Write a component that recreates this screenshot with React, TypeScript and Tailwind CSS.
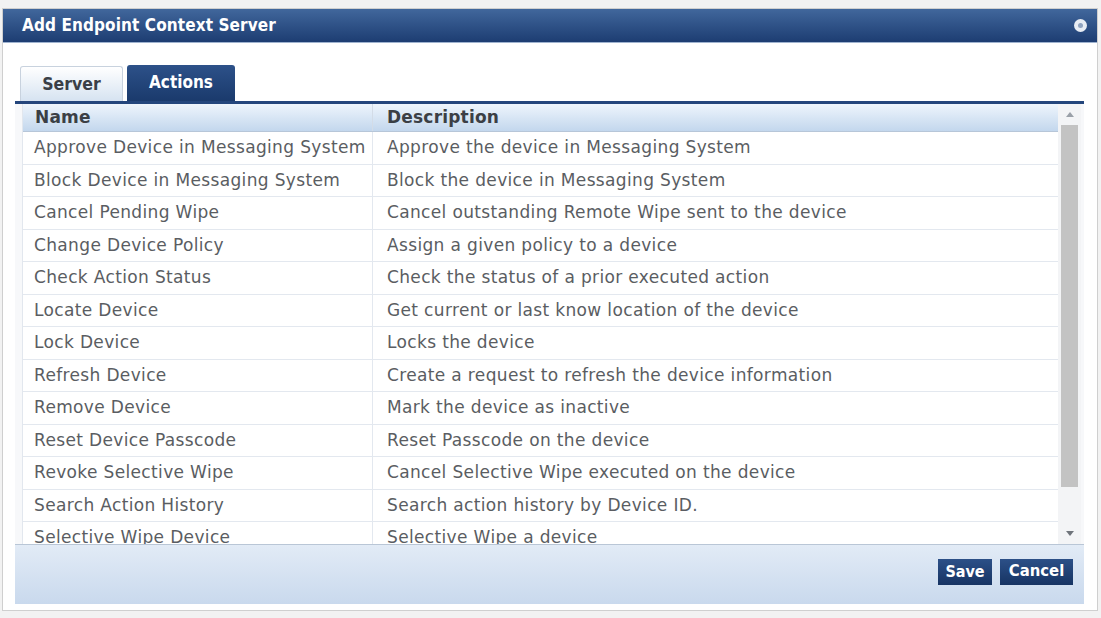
import React from "react";

const rows: [string, string][] = [
  ["Approve Device in Messaging System", "Approve the device in Messaging System"],
  ["Block Device in Messaging System", "Block the device in Messaging System"],
  ["Cancel Pending Wipe", "Cancel outstanding Remote Wipe sent to the device"],
  ["Change Device Policy", "Assign a given policy to a device"],
  ["Check Action Status", "Check the status of a prior executed action"],
  ["Locate Device", "Get current or last know location of the device"],
  ["Lock Device", "Locks the device"],
  ["Refresh Device", "Create a request to refresh the device information"],
  ["Remove Device", "Mark the device as inactive"],
  ["Reset Device Passcode", "Reset Passcode on the device"],
  ["Revoke Selective Wipe", "Cancel Selective Wipe executed on the device"],
  ["Search Action History", "Search action history by Device ID."],
  ["Selective Wipe Device", "Selective Wipe a device"],
];

const cond = { fontFamily: '"DejaVu Sans Condensed", "DejaVu Sans", sans-serif' };

export default function App() {
  return (
    <div
      className="w-[1101px] h-[618px] bg-[#f2f2f2] pt-[8px] pl-[2px] overflow-hidden"
      style={{ fontFamily: '"DejaVu Sans", Verdana, sans-serif' }}
    >
      <div className="w-[1096px] h-[603px] bg-white border border-[#cfcfcf] flex flex-col">
        {/* Title bar */}
        <div className="h-[34px] flex items-center justify-between px-[19px] pr-[10px] bg-gradient-to-b from-[#41679c] to-[#1d3d72] border-b border-[#9fb3cf]">
          <span className="text-white font-bold text-[17px] tracking-[0.1px]" style={cond}>
            Add Endpoint Context Server
          </span>
          <span className="w-[13px] h-[13px] rounded-full bg-[#e8edf4] flex items-center justify-center">
            <span className="w-[5px] h-[5px] rounded-full bg-[#8fa3bf]" />
          </span>
        </div>

        {/* Body */}
        <div className="flex-1 flex flex-col pl-[12px] pr-[13px] pt-[22px]">
          {/* Tabs */}
          <div className="flex items-end h-[36px] pl-[5px] gap-[4px]">
            <div
              className="h-[35px] w-[103px] flex items-center justify-center rounded-t-[3px] border border-b-0 border-[#c8d2de] bg-gradient-to-b from-[#ffffff] to-[#d6e3f1] text-[#3a3f47] font-bold text-[17.5px]"
              style={cond}
            >
              Server
            </div>
            <div
              className="h-[36px] w-[108px] flex items-center justify-center rounded-t-[3px] bg-gradient-to-b from-[#2d5189] to-[#1a3a6c] text-white font-bold text-[17px]"
              style={cond}
            >
              Actions
            </div>
          </div>
          <div className="h-[3px] bg-[#24467c]" />

          {/* Table area */}
          <div className="h-[440px] flex pl-[7px] pr-[3px] bg-[#f7f8fa]">
            <div className="flex-1 flex flex-col overflow-hidden bg-white border-l border-[#e2e7ee]">
              <div className="h-[28px] flex shrink-0 bg-gradient-to-b from-[#eef5fc] to-[#c3d7ed] border-b border-[#b7c6d8] text-[#3b3f45] font-bold text-[17px] tracking-[0.2px]">
                <div className="w-[350px] pl-[12px] flex items-center border-r border-[#d3dce7]">Name</div>
                <div className="flex-1 pl-[14px] flex items-center">Description</div>
              </div>
              {rows.map(([n, d]) => (
                <div
                  key={n}
                  className="h-[32.5px] shrink-0 flex border-b border-[#e3e8ef] text-[#5a5d62] text-[17px] tracking-[0.35px]"
                >
                  <div className="w-[350px] pl-[11px] flex items-center border-r border-[#e3e8ef] whitespace-nowrap">
                    {n}
                  </div>
                  <div className="flex-1 pl-[14px] flex items-center whitespace-nowrap">{d}</div>
                </div>
              ))}
            </div>
            {/* Scrollbar */}
            <div className="w-[23px] flex flex-col items-center bg-[#f3f4f6] pt-[8px] pb-[8px]">
              <div className="w-0 h-0 border-l-[4px] border-r-[4px] border-b-[5px] border-l-transparent border-r-transparent border-b-[#9aa0a8]" />
              <div className="w-[17px] flex-1 bg-[#c3c3c3] mt-[8px] mb-[44px]" />
              <div className="w-0 h-0 border-l-[4px] border-r-[4px] border-t-[5px] border-l-transparent border-r-transparent border-t-[#6f747b]" />
            </div>
          </div>

          {/* Footer */}
          <div className="h-[60px] flex items-center justify-end gap-[8px] pr-[11px] pb-[6px] bg-gradient-to-b from-[#e2ebf6] to-[#c9d9ed] border-t border-[#b9c6d6]">
            <button
              className="h-[26px] w-[54px] bg-gradient-to-b from-[#2c5088] to-[#173463] text-white font-bold text-[16px]"
              style={cond}
            >
              Save
            </button>
            <button
              className="h-[26px] w-[73px] bg-gradient-to-b from-[#2c5088] to-[#173463] text-white font-bold text-[16.5px]"
              style={cond}
            >
              Cancel
            </button>
          </div>
        </div>
      </div>
    </div>
  );
}
